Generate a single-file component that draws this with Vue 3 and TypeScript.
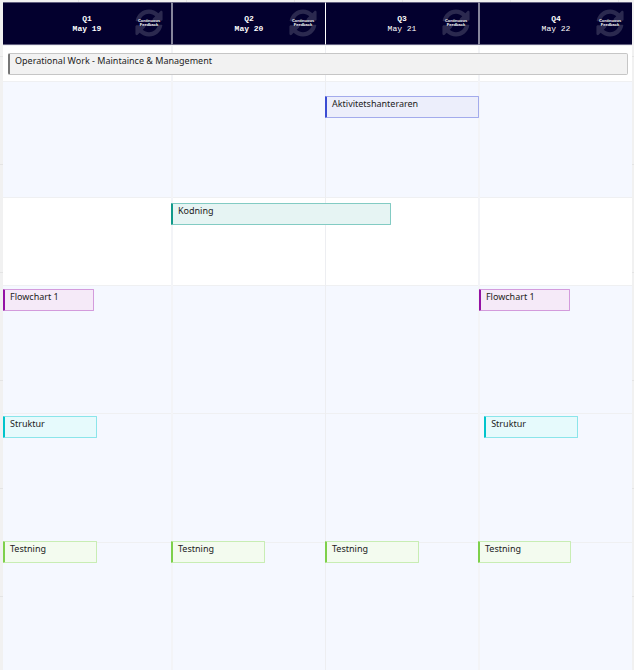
<script setup lang="ts">
interface Quarter { name: string; date: string; strong: boolean }
interface Task { label: string; tone: string; column: number; span: number; start: number; width: number }
interface Lane { id: string; height: number; top: number; white: boolean; tasks: Task[] }

const quarters: Quarter[] = [
  { name: 'Q1', date: 'May 19', strong: true },
  { name: 'Q2', date: 'May 20', strong: true },
  { name: 'Q3', date: 'May 21', strong: false },
  { name: 'Q4', date: 'May 22', strong: false },
]

// start and width are percentages of the columns that the task spans
const lanes: Lane[] = [
  { id: 'operations', height: 36, top: 8, white: true, tasks: [
    { label: 'Operational Work - Maintaince & Management', tone: 'gray', column: 1, span: 4, start: 0.8, width: 98.6 },
  ] },
  { id: 'activity', height: 116, top: 15, white: false, tasks: [
    { label: 'Aktivitetshanteraren', tone: 'blue', column: 3, span: 1, start: 0, width: 100.6 },
  ] },
  { id: 'coding', height: 88, top: 6, white: true, tasks: [
    { label: 'Kodning', tone: 'teal', column: 2, span: 2, start: 0, width: 71.8 },
  ] },
  { id: 'flowchart', height: 128, top: 4, white: false, tasks: [
    { label: 'Flowchart 1', tone: 'purple', column: 1, span: 1, start: 0, width: 54.2 },
    { label: 'Flowchart 1', tone: 'purple', column: 4, span: 1, start: 0.6, width: 59.2 },
  ] },
  { id: 'structure', height: 129, top: 3, white: false, tasks: [
    { label: 'Struktur', tone: 'cyan', column: 1, span: 1, start: 0, width: 56 },
    { label: 'Struktur', tone: 'cyan', column: 4, span: 1, start: 4, width: 61 },
  ] },
  { id: 'testing', height: 128, top: -1, white: false, tasks: [
    { label: 'Testning', tone: 'green', column: 1, span: 1, start: 0, width: 56 },
    { label: 'Testning', tone: 'green', column: 2, span: 1, start: 0, width: 61 },
    { label: 'Testning', tone: 'green', column: 3, span: 1, start: 0, width: 61.4 },
    { label: 'Testning', tone: 'green', column: 4, span: 1, start: 0, width: 60.6 },
  ] },
]
</script>

<template>
  <main class="canvas">
    <section class="board">
      <header class="tracks head">
        <div v-for="q in quarters" :key="q.name" class="quarter">
          <div class="title">
            <strong>{{ q.name }}</strong>
            <span :class="{ strong: q.strong }">{{ q.date }}</span>
          </div>
          <div class="feedback">
            <svg viewBox="0 0 512 512" aria-hidden="true">
              <path d="M370.72 133.28C339.458 104.008 298.888 87.962 255.848 88c-77.458.068-144.328 53.178-162.791 126.85-1.344 5.363-6.122 9.15-11.651 9.15H24.103c-7.498 0-13.194-6.807-11.807-14.176C33.933 94.924 134.813 8 256 8c66.448 0 126.791 26.136 171.315 68.685L463.03 40.97C478.149 25.851 504 36.559 504 57.941V192c0 13.255-10.745 24-24 24H345.941c-21.382 0-32.09-25.851-16.971-40.971l41.75-41.749zM32 296h134.059c21.382 0 32.09 25.851 16.971 40.971l-41.75 41.75c31.262 29.273 71.835 45.319 114.876 45.28 77.418-.07 144.315-53.144 162.787-126.849 1.344-5.363 6.122-9.15 11.651-9.15h57.304c7.498 0 13.194 6.807 11.807 14.176C478.067 417.076 377.187 504 256 504c-66.448 0-126.791-26.136-171.315-68.685L48.97 471.03C33.851 486.149 8 475.441 8 454.059V320c0-13.255 10.745-24 24-24z" />
            </svg>
            <span>Continuous<br>Feedback</span>
          </div>
        </div>
      </header>
      <section v-for="lane in lanes" :key="lane.id" class="tracks lane" :class="{ white: lane.white }" :style="{ minHeight: lane.height + 'px' }">
        <div v-for="n in 4" :key="n" class="cell" :style="{ gridColumn: n }"></div>
        <div v-for="task in lane.tasks" :key="task.column" class="slot" :style="{ gridColumn: `${task.column} / span ${task.span}` }">
          <div class="task" :class="task.tone" :style="{ marginTop: lane.top + 'px', marginLeft: task.start + '%', width: task.width + '%' }">{{ task.label }}</div>
        </div>
      </section>
    </section>
  </main>
</template>

<style>
body { margin: 0; }
</style>

<style scoped>
.canvas {
  box-sizing: border-box;
  min-height: 100vh;
  padding: 2px 2px 0 3px;
  background-color: #f1f1f1;
  background-image:
    linear-gradient(#e4e4e4 1px, transparent 1px),
    linear-gradient(90deg, #e4e4e4 1px, transparent 1px);
  background-size: 108px 108px;
  background-position: 78px 56px;
  font-family: "Noto Sans", "Open Sans", sans-serif;
}
.board { background: #f5f8ff; }
.tracks {
  display: grid;
  grid-template-columns: 168fr 154fr 153fr 154fr;
}
.head {
  min-height: 43px;
  background: #03002e;
  color: #fff;
}
.quarter {
  display: grid;
  grid-template-columns: 1fr auto 1fr;
  align-items: center;
  box-sizing: border-box;
  padding-bottom: 2px;
  border-top: 1px solid #62607f;
  border-bottom: 1px solid #62607f;
}
.quarter:nth-child(2), .quarter:nth-child(4) { border-left: 2px solid #86859c; }
.quarter:nth-child(3) { border-left: 1px solid #fff; }
.title {
  grid-column: 2;
  display: flex;
  flex-direction: column;
  align-items: center;
  padding-top: 2px;
  font: 8px/10px "Liberation Mono", monospace;
}
.title .strong { font-weight: 700; }
.feedback {
  display: grid;
  place-items: center;
  justify-self: end;
  margin-right: 8px;
}
.feedback > * { grid-area: 1 / 1; }
.feedback svg {
  width: 28px;
  height: 28px;
  fill: #2b294f;
}
.feedback span {
  font: 700 4px/4px "Liberation Sans", sans-serif;
  text-align: center;
}
.lane {
  grid-template-rows: 1fr;
  box-shadow: inset 0 1px #eff0f2;
}
.lane.white { background: #fff; }
.cell { grid-row: 1; }
.cell:nth-child(2), .cell:nth-child(4) { border-left: 2px solid #f3f4f7; }
.cell:nth-child(3) { border-left: 1px solid #edeef1; }
.slot {
  grid-row: 1;
  min-width: 0;
}
.task {
  box-sizing: border-box;
  height: 22px;
  padding-left: 5px;
  border: 1px solid;
  border-left-width: 2px;
  border-radius: 1px;
  color: #222;
  font-size: 9px;
  line-height: 14px;
  white-space: nowrap;
}
.gray { background: #f2f2f2; border-color: #c6c6c6; border-left-color: #777; border-radius: 2px; }
.blue { background: #eceefb; border-color: #a3abec; border-left-color: #3a4cd3; }
.teal { background: #e6f4f3; border-color: #82cbc3; border-left-color: #12998a; }
.purple { background: #f5eaf8; border-color: #d39bdc; border-left-color: #9412a5; }
.cyan { background: #e6fafc; border-color: #8be5ea; border-left-color: #00c4cc; }
.green { background: #f3fbef; border-color: #c8edb4; border-left-color: #7ed04b; }
</style>
